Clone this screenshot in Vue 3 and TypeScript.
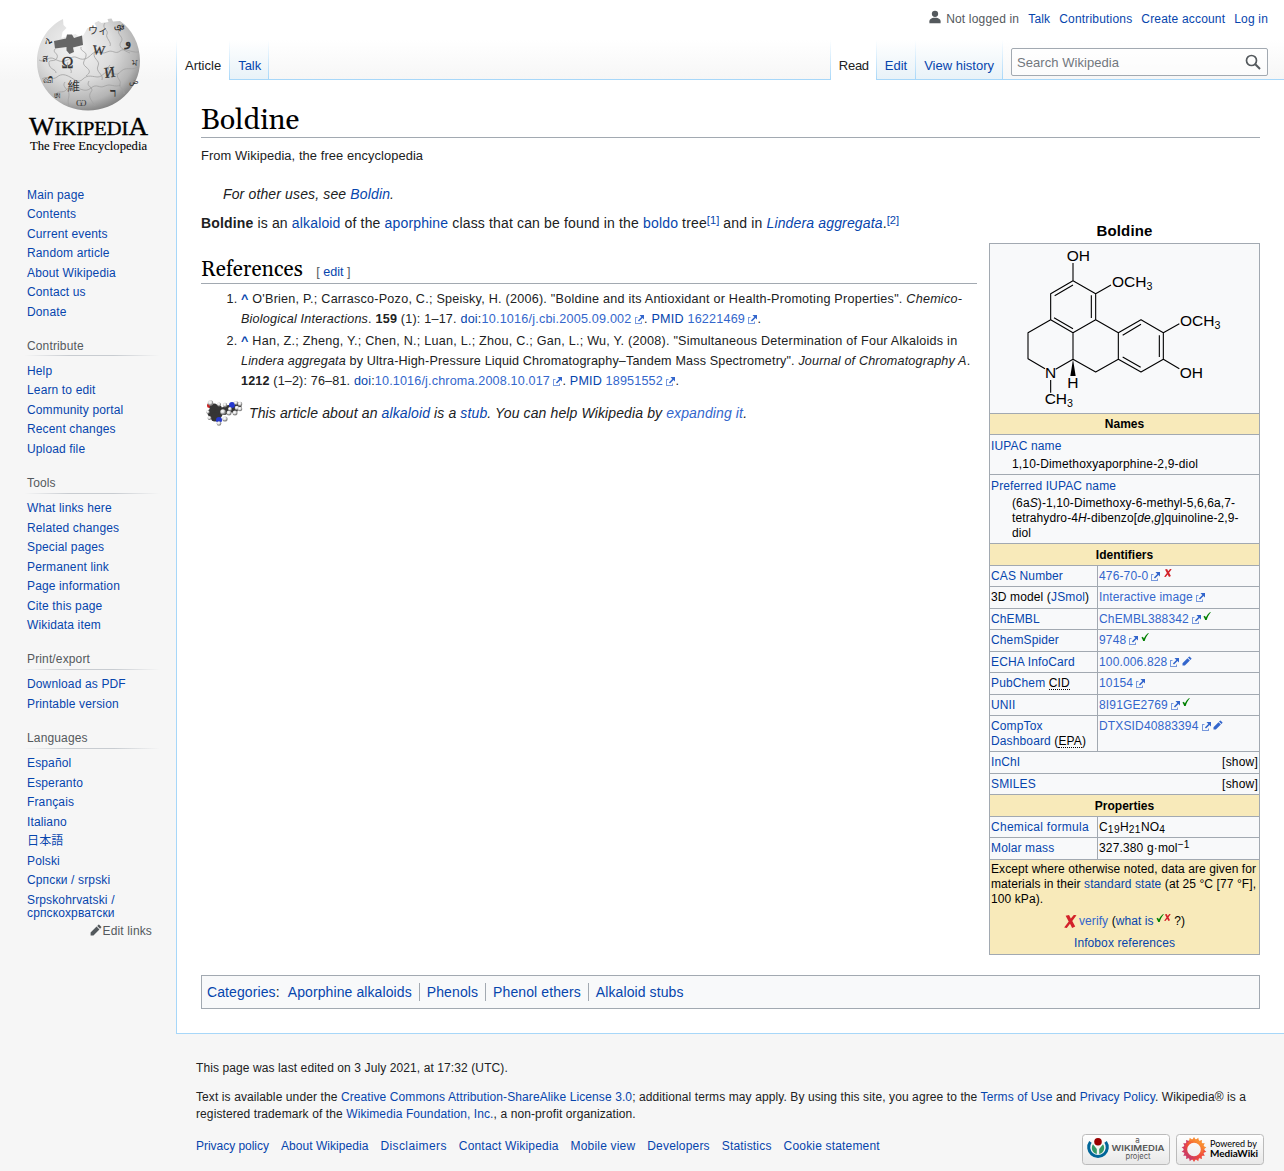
<script setup lang="ts">
import { h } from 'vue'

interface Portal { title?: string; items: string[] }

const portals: Portal[] = [
  { items: ['Main page', 'Contents', 'Current events', 'Random article', 'About Wikipedia', 'Contact us', 'Donate'] },
  { title: 'Contribute', items: ['Help', 'Learn to edit', 'Community portal', 'Recent changes', 'Upload file'] },
  { title: 'Tools', items: ['What links here', 'Related changes', 'Special pages', 'Permanent link', 'Page information', 'Cite this page', 'Wikidata item'] },
  { title: 'Print/export', items: ['Download as PDF', 'Printable version'] },
  { title: 'Languages', items: ['Español', 'Esperanto', 'Français', 'Italiano', '日本語', 'Polski', 'Српски / srpski', 'Srpskohrvatski / српскохрватски'] },
]

type Mark = 'check' | 'cross' | 'pencil' | ''
interface Ident { label: string; value: string; mark: Mark; before?: string; after?: string; abbr?: string }

const identifiers: Ident[] = [
  { label: 'CAS Number', value: '476-70-0', mark: 'cross' },
  { before: '3D model (', label: 'JSmol', after: ')', value: 'Interactive image', mark: '' },
  { label: 'ChEMBL', value: 'ChEMBL388342', mark: 'check' },
  { label: 'ChemSpider', value: '9748', mark: 'check' },
  { label: 'ECHA InfoCard', value: '100.006.828', mark: 'pencil' },
  { label: 'PubChem', after: ' ', abbr: 'CID', value: '10154', mark: '' },
  { label: 'UNII', value: '8I91GE2769', mark: 'check' },
]

const footerLinks = ['Privacy policy', 'About Wikipedia', 'Disclaimers', 'Contact Wikipedia', 'Mobile view', 'Developers', 'Statistics', 'Cookie statement']
const categories = ['Aporphine alkaloids', 'Phenols', 'Phenol ethers', 'Alkaloid stubs']
const petals = Array.from({ length: 18 }, (_, i) => i * 20)

const marks: Record<string, { d: string; fill: string; box: string }> = {
  check: { d: 'M.3 4.700 1.900 3.700 2.900 5.500C3.900 3.300 5.200 1.500 7.200 0L7.800.3C6 2.500 4.600 5 3.700 7.900H2.200C1.700 6.400 1.200 5.400.3 4.700z', fill: '#008000', box: '0 0 8 8' },
  cross: { d: 'M1 .5 3.100 0 4.200 2.200 6.100-.1 7.700.2 5.100 3.700 6.900 7.100 5 8 3.700 5.400 1.700 8 .1 7.700 2.900 4z', fill: '#d3222a', box: '0 0 8 8' },
  pencil: { d: 'M16.770 8l1.940-2a1 1 0 0 0 0-1.410l-3.340-3.300a1 1 0 0 0-1.410 0L12 3.230zM1 14.250V19h4.750l9.960-9.960-4.750-4.750z', fill: '#36c', box: '0 0 20 20' },
}

const MarkIcon = (props: { kind: string; size: number }) =>
  h('svg', { viewBox: marks[props.kind].box, width: props.size, height: props.size }, [
    h('path', { d: marks[props.kind].d, fill: marks[props.kind].fill }),
  ])
MarkIcon.props = ['kind', 'size']

const ExtIcon = () =>
  h('svg', { viewBox: '0 0 11 11', width: 11, height: 11, style: 'margin-left:2px;margin-right:-.5px;vertical-align:-2px' }, [
    h('path', { fill: '#36c', opacity: '.65', d: 'M1 3h2.500v1H2v5h5V7.500h1V10H1z' }),
    h('path', { fill: '#36c', d: 'M5.500 1H10v4.500L8.500 4 5 7.500 3.900 6.400 7.300 2.900z' }),
  ])
</script>

<template>
  <div class="page">
    <aside class="sidebar">
      <svg class="logo" width="160" height="160" viewBox="0 0 160 160">
        <defs>
          <radialGradient id="globe" cx="38%" cy="32%" r="72%">
            <stop offset="0" stop-color="#f4f4f4" /><stop offset=".5" stop-color="#dcdcdc" />
            <stop offset=".82" stop-color="#b4b4b4" /><stop offset="1" stop-color="#7e7e7e" />
          </radialGradient>
        </defs>
        <path fill="url(#globe)" d="M52 19C36 27 26 43 26 62c0 27 23 48.500 51 48.500S129 89 129 61c0-17-8-32-20-40l-7 .5-1.500-3-4 .5 1 3-7 1-3-2-4 2 2 4-9 1-4 7-4 2-4-3-7 2-7 2 1-6 4-4-3-3z" />
        <path fill="#666" d="m43 41 12-2.500 1-4 5 0 2 3.500 8-2.500 1 9.500-10 2.500 1 4.500-4.500 2-3-3.500v-3.500l-11.500 1.500z" />
        <g fill="none" stroke="#a0a0a0" stroke-width=".8">
          <path d="M44 49c-3 4 4 4 2 9s-9 0-8 6 7 5 7 9M70 47c-1 5 6 4 5 9s-5 7 0 11 4 6 0 9M94 23c-4 5 4 7 2 11s5 8 3 12M108 29c-3 6 6 8 2 13s4 9 9 11" />
          <path d="M28 60c5 3 8-2 12-2s8 5 14 3 7-6 13-3 10 0 14-4 9 1 15-2 8 3 13-1 10 2 19 1" />
          <path d="M31 79c6-4 10 2 15-2s9-2 13 0 8 7 13 2 10-2 15-2 7-8 14-4 8-3 13-4 8 1 13-2" />
          <path d="M43 97c3-8 9-3 12-7s9 0 12-1 7 4 13-1 8 1 14-2 9 2 16-1M57 62c-3 5 5 6 3 11M84 51c-4 8 6 9 3 15s6 8 4 14M99 65c-5 5 4 8 2 13M54 82c-4 5 4 7 4 12s-2 6 0 12M78 81c-4 6 6 6 2 11s2 10 4 14M108 73c-5 4 3 7 1 11s5 4 4 10" />
        </g>
        <g fill="#333" font-family="'Liberation Serif', serif">
          <text x="50.500" y="68" font-size="16" stroke="#333" stroke-width=".3">Ω</text>
          <text x="81.500" y="54" font-size="13" stroke="#333" stroke-width=".3" transform="rotate(5 82 54)">W</text>
          <text x="94" y="78" font-size="15" stroke="#333" stroke-width=".3" transform="rotate(-8 94 78)">И</text>
          <text x="56.500" y="90.500" font-size="12.500" font-family="'Noto Sans CJK TC', sans-serif">維</text>
          <text x="77" y="34" font-size="10" font-family="'Noto Sans CJK JP', sans-serif">ウィ</text>
          <text x="99" y="97" font-size="13" font-weight="bold">ר</text>
          <text x="114" y="46" font-size="13" font-weight="bold">و</text>
          <text x="103" y="31" font-size="10" font-weight="bold">ঞ</text>
          <text x="34" y="43" font-size="9">ኢ</text>
          <text x="31" y="62" font-size="10">ส</text>
          <text x="32" y="83" font-size="9">வி</text>
          <text x="65" y="106" font-size="9">Ѡ</text>
          <text x="121" y="66" font-size="10">ম</text>
          <text x="118" y="84" font-size="8">ض</text>
          <text x="43" y="99" font-size="8">ཨ</text>
        </g>
        <g fill="#000" font-family="'Liberation Serif', serif">
          <text x="18" y="134.500" font-size="24.500" textLength="119" lengthAdjust="spacingAndGlyphs" stroke="#000" stroke-width=".35">W<tspan font-size="18.500">IKIPEDI</tspan>A</text>
          <text x="19" y="150" font-size="13" textLength="117" lengthAdjust="spacingAndGlyphs" stroke="#000" stroke-width=".1">The Free Encyclopedia</text>
        </g>
      </svg>
      <nav v-for="(p, i) in portals" :key="i">
        <h3 v-if="p.title">{{ p.title }}</h3>
        <ul><li v-for="it in p.items" :key="it"><a>{{ it }}</a></li></ul>
      </nav>
      <div class="edit-links">
        <svg viewBox="0 0 20 20" width="12" height="12"><path :d="marks.pencil.d" fill="#54595d" /></svg>Edit links
      </div>
    </aside>

    <div class="right">
      <header class="head">
        <div class="personal">
          <span class="anon"><svg viewBox="0 0 20 20" width="14" height="14" fill="#54595d"><path d="M10 11c-5.920 0-8 3-8 5v3h16v-3c0-2-2.080-5-8-5z" /><circle cx="10" cy="5.500" r="4.500" /></svg>Not logged in</span>
          <a>Talk</a><a>Contributions</a><a>Create account</a><a>Log in</a>
        </div>
        <div class="bar">
          <div class="tabs"><span class="on">Article</span><a class="talk">Talk</a></div>
          <div class="tabs second"><span class="on">Read</span><a>Edit</a><a>View history</a></div>
          <div class="search">Search Wikipedia
            <svg viewBox="0 0 16 16" width="16" height="16" fill="none" stroke="#54595d"><circle cx="6.500" cy="6.500" r="5" stroke-width="1.700" /><path d="m10.300 10.300 4.700 4.700" stroke-width="2" /></svg>
          </div>
        </div>
      </header>

      <main class="content">
        <h1>Boldine</h1>
        <div class="sub">From Wikipedia, the free encyclopedia</div>
        <div class="hatnote">For other uses, see <a>Boldin</a>.</div>
        <div class="cols">
          <div class="article">
            <p class="lead"><b>Boldine</b> is an <a>alkaloid</a> of the <a>aporphine</a> class that can be found in the <a>boldo</a> tree<sup><a>[1]</a></sup> and in <i><a>Lindera aggregata</a></i>.<sup><a>[2]</a></sup></p>
            <h2>References<span class="edit">[ <a>edit</a> ]</span></h2>
            <ol>
              <li><span class="wide"><b><a>^</a></b> O'Brien, P.; Carrasco-Pozo, C.; Speisky, H. (2006). "Boldine and its Antioxidant or Health-Promoting Properties". <i>Chemico-</i></span><br><span class="mid"><i>Biological Interactions</i>. <b>159</b> (1): 1–17. <a>doi</a>:<a class="ext">10.1016/j.cbi.2005.09.002<ExtIcon /></a>. <a>PMID</a> <a class="ext">16221469<ExtIcon /></a>.</span></li>
              <li><span class="wide"><b><a>^</a></b> Han, Z.; Zheng, Y.; Chen, N.; Luan, L.; Zhou, C.; Gan, L.; Wu, Y. (2008). "Simultaneous Determination of Four Alkaloids in</span><br><i>Lindera aggregata</i> by Ultra-High-Pressure Liquid Chromatography–Tandem Mass Spectrometry". <i>Journal of Chromatography A</i>.<br><b>1212</b> (1–2): 76–81. <a>doi</a>:<a class="ext">10.1016/j.chroma.2008.10.017<ExtIcon /></a>. <a>PMID</a> <a class="ext">18951552<ExtIcon /></a>.</li>
            </ol>
            <div class="stub">
              <svg width="38" height="26" viewBox="0 0 38 26">
                <defs><radialGradient id="white" cx="40%" cy="35%"><stop offset="0" stop-color="#fff" /><stop offset=".6" stop-color="#ddd" /><stop offset="1" stop-color="#888" /></radialGradient></defs>
                <circle cx="3.500" cy="5.500" r="2.500" fill="#c22" />
                <g fill="#353535"><circle cx="8" cy="8" r="4.500" /><circle cx="12" cy="9" r="4" /><circle cx="6" cy="13" r="4.500" /><circle cx="12" cy="14" r="4.500" /><circle cx="9" cy="17" r="4.500" /><circle cx="18" cy="11" r="4" /><circle cx="23" cy="9" r="4" /><circle cx="28" cy="9" r="4" /><circle cx="32" cy="6" r="3.500" /></g>
                <g fill="#2538cf"><circle cx="13" cy="20" r="3" /><circle cx="26" cy="5" r="3" /></g>
                <g fill="url(#white)"><circle cx="4.500" cy="3" r="2.700" /><circle cx="13" cy="4.500" r="2" /><circle cx="2" cy="12" r="1.700" /><circle cx="3.500" cy="18" r="1.900" /><circle cx="13" cy="23.500" r="2.300" /><circle cx="19" cy="19" r="2.600" /><circle cx="17" cy="12" r="2.800" /><circle cx="19" cy="5" r="2.200" /><circle cx="23" cy="13" r="2.500" /><circle cx="24" cy="9" r="2" /><circle cx="29" cy="13" r="2.500" /><circle cx="30" cy="3" r="2" /><circle cx="31" cy="8" r="2.300" /><circle cx="34" cy="4" r="2.300" /><circle cx="34" cy="9" r="2.300" /></g>
              </svg>
              <span>This article about an <a>alkaloid</a> is a <a>stub</a>. You can help Wikipedia by <a class="ext">expanding it</a>.</span>
            </div>
          </div>

          <aside class="infobox">
            <div class="caption">Boldine</div>
            <div class="box">
              <svg class="structure" viewBox="15 78 807 507" width="269" height="169">
                <g fill="none" stroke="#000" stroke-width="3.300" stroke-linejoin="round">
                  <path d="M264 135v53l68 39v78l-68 39-67-39v-78l67-39M332 227l46-26M332 305l68 39v80l-68 38-68-38v-80M197 305l-68 39v78l51 30M264 424l-52 30M197 486v38M400 344l68-39 67 39v80l-67 38-68-38M535 344l48-27M535 424l48 28" />
                  <path d="M209 233l55-32M319 232v68M207 299l57 33M413 352l55-33M523 352v65M413 417l54 31" />
                </g>
                <path d="M264 424l-8 50h16z" />
                <g font-family="'Liberation Sans', Arial, sans-serif" font-size="46.500">
                  <text x="245" y="128">OH</text>
                  <text x="381" y="207">OCH<tspan font-size="32" dy="8">3</tspan></text>
                  <text x="585" y="324">OCH<tspan font-size="32" dy="8">3</tspan></text>
                  <text x="584" y="481">OH</text>
                  <text x="180" y="481">N</text>
                  <text x="247" y="511">H</text>
                  <text x="179" y="559">CH<tspan font-size="32" dy="8">3</tspan></text>
                </g>
              </svg>
              <div class="title t1">Names</div>
              <div class="name n1"><a>IUPAC name</a><div>1,10-Dimethoxyaporphine-2,9-diol</div></div>
              <div class="name n2"><a>Preferred IUPAC name</a><div>(6a<i>S</i>)-1,10-Dimethoxy-6-methyl-5,6,6a,7-<br>tetrahydro-4<i>H</i>-dibenzo[<i>de</i>,<i>g</i>]quinoline-2,9-<br>diol</div></div>
              <div class="title t2">Identifiers</div>
              <div v-for="r in identifiers" :key="r.value" class="row">
                <div class="key">{{ r.before }}<a>{{ r.label }}</a><template v-if="r.abbr">&nbsp;<abbr>{{ r.abbr }}</abbr></template><template v-else>{{ r.after }}</template></div>
                <div class="val"><a class="ext">{{ r.value }}<ExtIcon /></a><MarkIcon v-if="r.mark" :class="['mark', r.mark]" :kind="r.mark" :size="r.mark === 'pencil' ? 10 : 8" /></div>
              </div>
              <div class="row tall">
                <div class="key"><a>CompTox<br>Dashboard</a> (<abbr>EPA</abbr>)</div>
                <div class="val"><a class="ext">DTXSID40883394<ExtIcon /></a><MarkIcon class="mark pencil" kind="pencil" :size="10" /></div>
              </div>
              <div class="row show"><a>InChI</a><span>[show]</span></div>
              <div class="row show"><a>SMILES</a><span>[show]</span></div>
              <div class="title t3">Properties</div>
              <div class="row"><div class="key formula"><a>Chemical formula</a></div><div class="val">C<sub>19</sub>H<sub>21</sub>NO<sub>4</sub></div></div>
              <div class="row"><div class="key"><a>Molar mass</a></div><div class="val">327.380&nbsp;g·mol<sup>−1</sup></div></div>
              <div class="note">
                <div>Except where otherwise noted, data are given for<br>materials in their <a>standard state</a> (at 25&nbsp;°C [77&nbsp;°F],<br>100&nbsp;kPa).</div>
                <div class="verify"><MarkIcon class="big" kind="cross" :size="13" /><a class="ext">verify</a>&nbsp;(<a>what is</a><MarkIcon class="m1" kind="check" :size="8" /><MarkIcon class="m2" kind="cross" :size="7" />&nbsp;?)</div>
                <div class="refs"><a>Infobox references</a></div>
              </div>
            </div>
          </aside>
        </div>
        <div class="cats"><a>Categories</a>: <ul><li v-for="c in categories" :key="c"><a>{{ c }}</a></li></ul></div>
      </main>

      <footer>
        <p class="f1">This page was last edited on 3 July 2021, at 17:32<span> (UTC).</span></p>
        <p class="f2">Text is available under the <a>Creative Commons Attribution-ShareAlike License 3.0</a>; additional terms may apply. By using this site, you agree to the <a>Terms of Use</a> and <a>Privacy Policy</a>. Wikipedia® is a<br>registered trademark of the <a>Wikimedia Foundation, Inc.</a>, a non-profit organization.</p>
        <div class="bottom">
          <div class="flinks"><a v-for="f in footerLinks" :key="f">{{ f }}</a></div>
          <div class="badges">
            <svg width="88" height="31" viewBox="0 0 88 31">
              <defs><linearGradient id="badge" x2="0" y2="1"><stop offset="0" stop-color="#fff" /><stop offset="1" stop-color="#e8e8e8" /></linearGradient></defs>
              <rect x=".5" y=".5" width="87" height="30" rx="3" fill="url(#badge)" stroke="#bbb" />
              <path d="M8.400 7.800a9.300 9.300 0 1 0 15.200 0" fill="none" stroke="#069" stroke-width="3" />
              <path d="M11 10.300a6.200 6.200 0 0 0 3.800 9.700V15zM21 10.300a6.200 6.200 0 0 1-3.800 9.700V15z" fill="#396" />
              <circle cx="16" cy="7.700" r="3.800" fill="#900" />
              <g fill="#555" text-anchor="middle" font-family="Inter, sans-serif">
                <text x="55.500" y="8.500" font-size="8">a</text>
                <text x="56" y="17" font-size="8" font-weight="600" textLength="53" lengthAdjust="spacingAndGlyphs">WIKIMEDIA</text>
                <text x="56" y="25" font-size="8" textLength="25" lengthAdjust="spacingAndGlyphs">project</text>
              </g>
            </svg>
            <svg width="88" height="31" viewBox="0 0 88 31">
              <defs><linearGradient id="sun" gradientUnits="userSpaceOnUse" x1="27" y1="5" x2="10" y2="26"><stop offset="0" stop-color="#fdb52e" /><stop offset=".55" stop-color="#f1493a" /><stop offset="1" stop-color="#b4367a" /></linearGradient></defs>
              <rect x=".5" y=".5" width="87" height="30" rx="3" fill="url(#badge)" stroke="#bbb" />
              <circle cx="18" cy="15.500" r="8.600" fill="none" stroke="url(#sun)" stroke-width="3.600" />
              <path v-for="a in petals" :key="a" d="M16.200 6 18 3l1.800 3z" :fill="a < 100 || a > 320 ? '#f88a32' : a < 200 ? '#ee4a3e' : '#d03c66'" :transform="`rotate(${a} 18 15.500)`" />
              <g fill="#000" font-family="Lato, sans-serif">
                <text x="34" y="12.500" font-size="9" textLength="47" lengthAdjust="spacingAndGlyphs">Powered by</text>
                <text x="34" y="22.500" font-size="9.500" font-weight="bold" textLength="48" lengthAdjust="spacingAndGlyphs">MediaWiki</text>
              </g>
            </svg>
          </div>
        </div>
      </footer>
    </div>
  </div>
</template>

<style>
body { margin: 0; background: #f6f6f6; }
</style>

<style scoped>
.page { display: flex; height: 1171px; overflow: hidden; background: #f6f6f6 linear-gradient(#fff 50%, #f6f6f6 100%) no-repeat 0 0 / 100% 80px; font-family: 'Liberation Sans', Arial, 'Noto Sans CJK JP', sans-serif; color: #202122; }
a { color: #0645ad; }
a.ext { color: #36c; }
h1, h2, h3, p, ul, ol { margin: 0; padding: 0; font-weight: normal; }
ul { list-style: none; }

.sidebar { width: 176px; flex: none; font-size: 12px; letter-spacing: .14px; }
.logo { display: block; margin: 0 0 25.700px 11px; letter-spacing: 0; }
.sidebar li { margin-left: 27px; padding: 3px 0; line-height: 13.500px; width: 120px; }
.sidebar h3 { margin-left: 24px; width: 136px; box-sizing: border-box; height: 39.750px; padding: 16.600px 0 0 3px; font-size: 12px; line-height: 14px; color: #54595d; background: linear-gradient(to right, rgba(200, 204, 209, 0), #c8ccd1 33%, #c8ccd1 66%, rgba(200, 204, 209, 0)) no-repeat 0 33.300px / 100% 1px; }
.edit-links { width: 152px; text-align: right; color: #54595d; line-height: 11px; }
.edit-links svg { margin-right: 1px; vertical-align: -1px; }

.right { flex: 1; min-width: 0; }
.head { height: 79px; }
.personal { height: 40px; display: flex; justify-content: flex-end; gap: 9px; padding-right: 16px; font-size: 12px; line-height: 38px; letter-spacing: .18px; }
.anon { color: #54595d; }
.anon svg { margin-right: 4px; vertical-align: -1px; }
.bar { display: flex; height: 40px; }
.tabs { display: flex; height: 40px; padding-left: 1px; font-size: 13px; line-height: 51px; background: linear-gradient(#fff, #a7d7f9) no-repeat 0 0 / 1px 100%; }
.tabs.second { margin-left: auto; }
.tabs > * { padding: 0 9px 0 8px; height: 39px; background: linear-gradient(#fff, #a7d7f9) no-repeat right 0 / 1px 100%, linear-gradient(#fff, #e8f2f8); }
.tabs > .on { height: 40px; background: linear-gradient(#fff, #a7d7f9) no-repeat right 0 / 1px 100%, #fff; position: relative; z-index: 1; }
.second > .on { letter-spacing: -.3px; padding-right: 8px; }
.tabs > .talk { padding-right: 8px; }
.search { display: flex; justify-content: space-between; align-items: center; box-sizing: border-box; width: 257px; height: 28px; margin: 8px 16px 0 8px; padding: 0 6px 0 5px; border: 1px solid #a2a9b1; border-radius: 2px; background: rgba(255, 255, 255, .5); font-size: 13px; letter-spacing: .05px; color: #72777d; }

.content { box-sizing: border-box; height: 955px; border: 1px solid #a7d7f9; border-right: 0; background: #fff; padding: 20px 24px 0; }
h1 { height: 37px; border-bottom: 1px solid #a2a9b1; font: 28.800px/41px 'Linux Libertine', Georgia, Gelasio, 'Liberation Serif', serif; color: #000; }
.sub { font-size: 12.880px; line-height: 20px; margin-top: 8px; letter-spacing: .085px; }
.hatnote { margin: 17px 0 0 22px; font-size: 14px; line-height: 22px; font-style: italic; letter-spacing: .14px; }
.cols { display: flex; gap: 12px; margin-top: 7px; height: 763px; }
.article { width: 776px; flex: none; }
.lead { font-size: 14px; line-height: 22px; letter-spacing: .153px; }
.lead sup { font-size: 11.200px; line-height: 1; vertical-align: 4px; letter-spacing: 0; }
h2 { height: 28px; margin-top: 21px; border-bottom: 1px solid #a2a9b1; font: 21px/30px 'Linux Libertine', Georgia, Gelasio, 'Liberation Serif', serif; color: #000; }
.edit { margin-left: 13.500px; font: 12.600px 'Liberation Sans', Arial, sans-serif; color: #54595d; }
ol { margin: 5px 0 0 40px; font-size: 12.600px; line-height: 20px; letter-spacing: .155px; }
.wide { letter-spacing: .238px; }
.mid { letter-spacing: .2px; }
li { white-space: nowrap; }
.sidebar li { white-space: normal; }
ol li + li { margin-top: 2px; }
.stub { display: flex; align-items: center; gap: 5px; margin: 9px 0 0 5px; font-size: 14px; line-height: 26px; font-style: italic; letter-spacing: .12px; }

.infobox { width: 271px; flex: none; font-size: 12px; line-height: 15px; color: #000; white-space: nowrap; letter-spacing: .13px; }
.caption { height: 31px; line-height: 38px; text-align: center; font-size: 15px; font-weight: bold; }
.box { border: 1px solid #a2a9b1; background: #f8f9fa; }
.structure { display: block; letter-spacing: 0; }
.title { box-sizing: border-box; border-top: 1px solid #a2a9b1; background: #f8eaba; text-align: center; font-weight: bold; line-height: 22px; height: 21.430px; letter-spacing: 0; }
.t1 { height: 21px; line-height: 20px; }
.t2 { height: 22px; line-height: 22px; }
.name { box-sizing: border-box; border-top: 1px solid #a2a9b1; padding: 4px 1px 0; }
.name div { margin: 3px 0 0 21px; letter-spacing: .165px; }
.n1 { height: 40px; }
.n2 { height: 69px; }
.n2 div { margin-top: 2px; letter-spacing: .11px; }
.row { display: flex; box-sizing: border-box; height: 21.430px; border-top: 1px solid #a2a9b1; }
.key { box-sizing: border-box; width: 108px; padding: 3px 1px 0; border-right: 1px solid #a2a9b1; }
.formula { letter-spacing: .28px; }
.val { padding: 3px 1px 0; letter-spacing: .15px; }
.tall { height: 36.450px; }
.show { justify-content: space-between; padding: 3px 1px 0; }
.show span { letter-spacing: .2px; }
.mark { margin-left: 3px; vertical-align: 3px; }
.mark.check { margin-left: 2px; }
.mark.pencil { margin-left: 2px; vertical-align: 0; }
abbr { border-bottom: 1px dotted #000; line-height: 11px; display: inline-block; }
sub, sup { font-size: 85%; line-height: 1; }
.val sub { vertical-align: -2px; letter-spacing: .4px; }
.val sup { vertical-align: 4px; line-height: 8px; }
.note { box-sizing: border-box; height: 95.700px; border-top: 1px solid #a2a9b1; background: #f8eaba; padding: 2px 1px 0; letter-spacing: .09px; }
.verify { display: flex; justify-content: center; margin-top: 7px; }
.big { margin: 1px 2px 0 0; }
.m1 { margin-left: 2px; }
.refs { text-align: center; margin-top: 7px; }

.cats { display: flex; box-sizing: border-box; height: 34px; border: 1px solid #a2a9b1; background: #f8f9fa; padding: 0 5px; font-size: 14px; line-height: 33px; letter-spacing: .1px; }
.cats ul { display: flex; align-items: center; margin-left: 1px; }
.cats li { line-height: 18px; padding: 0 7px; border-left: 1px solid #a2a9b1; }
.cats li:first-child { border-left: 0; }

footer { padding: 26px 20px 0; font-size: 12px; line-height: 17px; letter-spacing: .1px; }
.f2 { margin-top: 12px; white-space: nowrap; }
.bottom { display: flex; justify-content: space-between; margin-top: 11px; letter-spacing: 0; }
.flinks { display: flex; gap: 12px; margin-top: 4px; letter-spacing: .18px; }
.flinks a:nth-child(-n+2) { letter-spacing: -.03px; }
.flinks a:nth-child(3) { letter-spacing: .4px; }
.flinks a:nth-child(2) { letter-spacing: .05px; }
.badges { display: flex; gap: 6px; }
</style>
